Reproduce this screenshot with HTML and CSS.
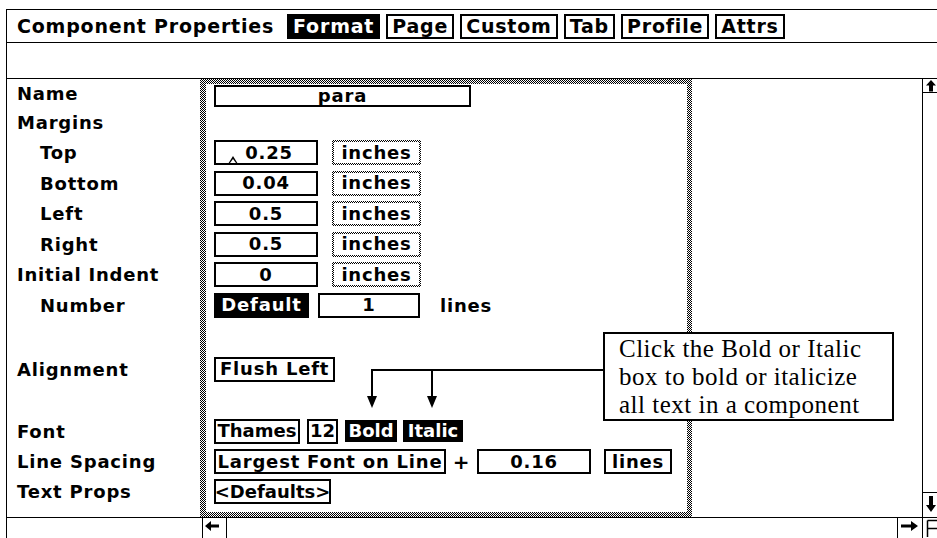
FILE: index.html
```html
<!DOCTYPE html>
<html>
<head>
    <title>Component Properties</title>
    <link rel="stylesheet" href="styles.css">
</head>
<body>
<div class="window">
    <div class="titlebar">
        <span class="title">Component Properties</span>
        <span class="tab tab-on">Format</span>
        <span class="tab">Page</span>
        <span class="tab">Custom</span>
        <span class="tab">Tab</span>
        <span class="tab">Profile</span>
        <span class="tab">Attrs</span>
    </div>
    <div class="subbar"></div>

    <div class="body">
        <div class="labels">
            <div class="lbl">Name</div>
            <div class="lbl">Margins</div>
            <div class="lbl sub">Top</div>
            <div class="lbl sub">Bottom</div>
            <div class="lbl sub">Left</div>
            <div class="lbl sub">Right</div>
            <div class="lbl">Initial Indent</div>
            <div class="lbl sub">Number</div>
            <div class="lbl"></div>
            <div class="lbl">Alignment</div>
            <div class="lbl"></div>
            <div class="lbl">Font</div>
            <div class="lbl">Line Spacing</div>
            <div class="lbl">Text Props</div>
        </div>

        <div class="panel">
            <div class="cell"><span class="box w-name">para</span></div>
            <div class="cell"></div>
            <div class="cell">
                <span class="box w-val caret-box"><span class="caret"></span>0.25</span>
                <span class="box dotted w-unit">inches</span>
            </div>
            <div class="cell">
                <span class="box w-val">0.04</span>
                <span class="box dotted w-unit">inches</span>
            </div>
            <div class="cell">
                <span class="box w-val">0.5</span>
                <span class="box dotted w-unit">inches</span>
            </div>
            <div class="cell">
                <span class="box w-val">0.5</span>
                <span class="box dotted w-unit">inches</span>
            </div>
            <div class="cell">
                <span class="box w-val">0</span>
                <span class="box dotted w-unit">inches</span>
            </div>
            <div class="cell">
                <span class="box on w-default">Default</span>
                <span class="box w-num">1</span>
                <span class="plain lines-txt">lines</span>
            </div>
            <div class="cell"></div>
            <div class="cell"><span class="box pad">Flush Left</span></div>
            <div class="cell"></div>
            <div class="cell font-row">
                <span class="box tight w-thames">Thames</span>
                <span class="box tight w-size">12</span>
                <span class="box on tight w-bold">Bold</span>
                <span class="box on tight w-italic">Italic</span>
            </div>
            <div class="cell spacing-row">
                <span class="box w-largest">Largest Font on Line</span>
                <span class="plus">+</span>
                <span class="box w-spacing">0.16</span>
                <span class="box w-lines">lines</span>
            </div>
            <div class="cell"><span class="box tight w-defaults">&lt;Defaults&gt;</span></div>
        </div>

        <div class="rest"></div>

        <div class="vscroll">
            <div class="vs-up">
                <svg width="14" height="13" viewBox="0 0 14 13"><polygon points="8,1 13,6.5 10,6.5 10,12.5 6,12.5 6,6.5 3,6.5" fill="#000"/></svg>
            </div>
            <div class="vs-track"></div>
            <div class="vs-down">
                <svg width="14" height="24" viewBox="0 0 14 24"><polygon points="6,3 10,3 10,12 13,12 8,19 3,12 6,12" fill="#000"/></svg>
            </div>
        </div>
    </div>

    <div class="hscroll">
        <div class="hs-space"></div>
        <div class="hs-btn hs-left">
            <svg width="23" height="19" viewBox="0 0 23 19"><polygon points="2,8 8,3 8,6.5 16,6.5 16,9.5 8,9.5 8,13" fill="#000"/></svg>
        </div>
        <div class="hs-track"></div>
        <div class="hs-btn hs-right">
            <svg width="24" height="19" viewBox="0 0 24 19"><polygon points="3,6.5 13,6.5 13,3 20,8 13,13 13,9.5 3,9.5" fill="#000"/></svg>
        </div>
        <div class="hs-corner">
            <svg width="14" height="19" viewBox="0 0 14 19"><path d="M4.5 2.5 H16 M4.5 2.5 V19 M4.5 10.5 H16" stroke="#000" stroke-width="1.5" fill="none"/></svg>
        </div>
    </div>

    <svg class="pointers" width="937" height="538" viewBox="0 0 937 538">
        <path d="M372 398 V370 H604 M432 398 V370" stroke="#000" stroke-width="2" fill="none"/>
        <polygon points="367,396 377,396 372,408" fill="#000"/>
        <polygon points="427,396 437,396 432,408" fill="#000"/>
    </svg>

    <div class="callout">
        Click the Bold or Italic<br>
        box to bold or italicize<br>
        all text in a component
    </div>
</div>
</body>
</html>
```

FILE: styles.css
```css
body {
    margin: 0;
    background-color: #fff;
    color: #000;
    font-family: "DejaVu Sans", sans-serif;
    font-weight: bold;
    font-size: 18px;
    letter-spacing: 0.8px;
    overflow: hidden;
}

.window {
    position: relative;
    margin: 9px 0 0 6px;
    border-left: 1px solid #000;
    border-top: 1px solid #000;
    height: 529px;
}

.titlebar {
    display: flex;
    align-items: center;
    gap: 6px;
    height: 32px;
    padding-left: 10px;
    border-bottom: 1px solid #000;
    font-size: 19px;
}

.title {
    margin-right: 7px;
}

.tab {
    display: inline-flex;
    align-items: center;
    height: 25px;
    padding: 0 4px;
    border: 2px solid #000;
    box-sizing: border-box;
    line-height: 1;
}

.tab-on {
    background-color: #000;
    color: #fff;
}

.subbar {
    height: 35px;
    border-bottom: 1px solid #000;
}

.body {
    display: flex;
    height: 438px;
}

.labels {
    display: grid;
    grid-template-rows: 28px repeat(7, 30.5px) 33px 31px 31px 31px 30px 30px;
    width: 193px;
}

.lbl {
    display: flex;
    align-items: center;
    padding-left: 10px;
}

.lbl.sub {
    padding-left: 33px;
}

.panel {
    display: grid;
    grid-template-rows: 23px repeat(7, 30.5px) 33px 31px 31px 31px 30px 30px;
    width: 492px;
    box-sizing: border-box;
    padding-left: 8px;
    border-style: solid;
    border-color: transparent;
    border-width: 5px 5px 5px 6px;
    background: linear-gradient(#fff, #fff) padding-box,
                repeating-conic-gradient(#000 0 25%, #fff 0 50%) 0 0 / 2px 2px border-box;
}

.cell {
    display: flex;
    align-items: center;
    gap: 14px;
}

.box {
    position: relative;
    display: inline-flex;
    align-items: center;
    justify-content: center;
    height: 25px;
    box-sizing: border-box;
    border: 2px solid #000;
    line-height: 1;
    white-space: nowrap;
}

.box.dotted {
    border-color: transparent;
    background: linear-gradient(#fff, #fff) padding-box,
                repeating-conic-gradient(#000 0 25%, #fff 0 50%) 0 0 / 2px 2px border-box;
}

.box.on {
    background-color: #000;
    color: #fff;
}

.box.pad {
    padding: 0 4px;
}

.box.tight {
    letter-spacing: 0;
}

.w-name {
    width: 257px;
    height: 22px;
}

.w-val {
    width: 104px;
}

.w-unit {
    width: 89px;
}

.w-default {
    width: 95px;
}

.w-num {
    width: 102px;
    margin-left: -5px;
}

.lines-txt {
    margin-left: 6px;
}

.font-row {
    gap: 7px;
}

.w-thames {
    width: 86px;
}

.w-size {
    width: 31px;
}

.w-bold {
    width: 52px;
    height: 22px;
}

.w-italic {
    width: 60px;
    height: 22px;
    margin-left: -1px;
}

.spacing-row {
    gap: 0;
}

.w-largest {
    width: 232px;
}

.plus {
    width: 31px;
    text-align: center;
    font-size: 20px;
}

.w-spacing {
    width: 114px;
}

.w-lines {
    width: 68px;
    margin-left: 13px;
}

.w-defaults {
    width: 117px;
}

.caret-box {
    padding-left: 6px;
}

.caret {
    position: absolute;
    left: 12px;
    bottom: -1px;
    width: 0;
    height: 0;
    border-left: 5px solid transparent;
    border-right: 5px solid transparent;
    border-bottom: 8px solid #000;
}

.caret::after {
    content: "";
    position: absolute;
    left: -3px;
    top: 3px;
    border-left: 3px solid transparent;
    border-right: 3px solid transparent;
    border-bottom: 4px solid #fff;
}

.rest {
    flex: 1;
}

.vscroll {
    display: flex;
    flex-direction: column;
    width: 15px;
    box-sizing: border-box;
    border-left: 1px solid #000;
}

.vs-up {
    height: 13px;
    border-bottom: 1px solid #000;
}

.vs-track {
    flex: 1;
}

.vs-down {
    height: 24px;
    border-top: 1px solid #000;
}

.vscroll svg,
.hscroll svg {
    display: block;
}

.hscroll {
    display: flex;
    height: 20px;
    border-top: 1px solid #000;
}

.hs-space {
    width: 195px;
}

.hs-btn {
    width: 25px;
    box-sizing: border-box;
    border-left: 1px solid #000;
}

.hs-left {
    border-right: 1px solid #000;
}

.hs-track {
    flex: 1;
}

.hs-corner {
    width: 15px;
    box-sizing: border-box;
    border-left: 1px solid #000;
    overflow: hidden;
}

.pointers {
    position: absolute;
    left: -7px;
    top: -10px;
    pointer-events: none;
}

.callout {
    position: absolute;
    left: 596px;
    top: 322px;
    width: 291px;
    height: 89px;
    box-sizing: border-box;
    padding: 1px 0 0 14px;
    border: 2px solid #000;
    background-color: #fff;
    font-family: "Liberation Serif", serif;
    font-weight: normal;
    font-size: 25px;
    line-height: 28px;
    letter-spacing: 0.5px;
    white-space: nowrap;
}
```
